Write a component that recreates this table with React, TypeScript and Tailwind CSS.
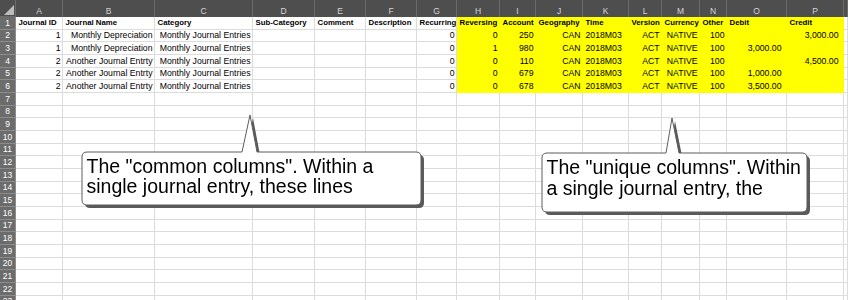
import React from "react";

const LETTERS = "ABCDEFGHIJKLMNOP".split("");
const COL_COUNT = 17; // A..P plus the partly visible Q
const ROW_COUNT = 23;

type Align = "l" | "r" | "rn";

// alignment of the body cells, column by column (A..Q)
const ALIGN: Align[] = ["r", "r", "r", "l", "l", "l", "r", "r", "r", "r", "l", "r", "r", "r", "rn", "rn", "l"];

const HEADERS = [
  "Journal ID",
  "Journal Name",
  "Category",
  "Sub-Category",
  "Comment",
  "Description",
  "Recurring",
  "Reversing",
  "Account",
  "Geography",
  "Time",
  "Version",
  "Currency",
  "Other",
  "Debit",
  "Credit",
  "",
];

const ROWS: string[][] = [
  ["1", "Monthly Depreciation", "Monthly Journal Entries", "", "", "", "0", "0", "250", "CAN", "2018M03", "ACT", "NATIVE", "100", "", "3,000.00", ""],
  ["1", "Monthly Depreciation", "Monthly Journal Entries", "", "", "", "0", "1", "980", "CAN", "2018M03", "ACT", "NATIVE", "100", "3,000.00", "", ""],
  ["2", "Another Journal Entrty", "Monthly Journal Entries", "", "", "", "0", "0", "110", "CAN", "2018M03", "ACT", "NATIVE", "100", "", "4,500.00", ""],
  ["2", "Another Journal Entrty", "Monthly Journal Entries", "", "", "", "0", "0", "679", "CAN", "2018M03", "ACT", "NATIVE", "100", "1,000.00", "", ""],
  ["2", "Another Journal Entrty", "Monthly Journal Entries", "", "", "", "0", "0", "678", "CAN", "2018M03", "ACT", "NATIVE", "100", "3,500.00", "", ""],
];

function isYellow(row: number, col: number) {
  // highlighted block H1:P6
  return row >= 1 && row <= 6 && col >= 7 && col <= 15;
}

function BodyCell({ row, col }: { row: number; col: number }) {
  const yellow = isYellow(row, col);
  let text = "";
  let bold = false;
  if (row === 1) {
    text = HEADERS[col];
    bold = true;
  } else if (row >= 2 && row <= 6) {
    text = ROWS[row - 2][col];
  }
  const align = row === 1 ? "l" : ALIGN[col];
  const alignCls =
    align === "l"
      ? "justify-start pl-[2.5px]"
      : align === "rn"
      ? "justify-end pr-[4.5px]"
      : "justify-end pr-[1.5px]";
  const fill = yellow ? "bg-[#ffff00] border-[#ffff00]" : "bg-white border-[#dcdcdc]";
  const weight = bold ? "font-bold text-[7.8px]" : "text-[8.7px]";
  return (
    <div
      className={`flex items-center overflow-hidden whitespace-nowrap border-r border-b leading-none text-black ${fill} ${alignCls} ${weight}`}
    >
      {text}
    </div>
  );
}

function Callouts() {
  const bubble1 =
    "M87 152 L242 152 L250 115 L257 152 L416 152 Q421 152 421 157 L421 200 Q421 205 416 205 L87 205 Q82 205 82 200 L82 157 Q82 152 87 152 Z";
  const bubble2 =
    "M547 153 L666 153 L672 118 L679 153 L802 153 Q807 153 807 158 L807 207 Q807 212 802 212 L547 212 Q542 212 542 207 L542 158 Q542 153 547 153 Z";
  return (
    <>
      <svg className="pointer-events-none absolute left-0 top-0" width="848" height="300" viewBox="0 0 848 300">
        <defs>
          <filter id="calloutShade" x="-5%" y="-5%" width="110%" height="120%">
            <feGaussianBlur stdDeviation="0.7" />
          </filter>
        </defs>
        <g filter="url(#calloutShade)" fill="#5a5a5a">
          <path d={bubble1} transform="translate(3 3)" />
          <path d={bubble2} transform="translate(3 3)" />
        </g>
        <path d={bubble1} fill="#ffffff" stroke="#5c5c5c" strokeWidth="1" />
        <path d={bubble2} fill="#ffffff" stroke="#5c5c5c" strokeWidth="1" />
      </svg>
      <div className="pointer-events-none absolute left-[86.5px] top-[156px] whitespace-nowrap font-['Liberation_Sans',Arial,sans-serif] text-[19.5px] leading-[20px] text-black">
        <div>The "common columns". Within a</div>
        <div>single journal entry, these lines</div>
      </div>
      <div className="pointer-events-none absolute left-[546.5px] top-[157px] whitespace-nowrap font-['Liberation_Sans',Arial,sans-serif] text-[19.5px] leading-[21px] text-black">
        <div>The "unique columns". Within</div>
        <div>a single journal entry, the</div>
      </div>
    </>
  );
}

export default function App() {
  const cells: React.ReactNode[] = [];

  // top-left corner with the select-all triangle
  cells.push(
    <div key="corner" className="relative border-r border-b border-[#6a6a6a] bg-[#4e4e4e]">
      <svg className="absolute left-[4px] top-[5px]" width="10" height="10" viewBox="0 0 10 10">
        <path d="M10 0 L10 10 L0 10 Z" fill="#bdbdbd" />
      </svg>
    </div>
  );
  for (let c = 0; c < COL_COUNT; c++) {
    cells.push(
      <div
        key={`h-${c}`}
        className="flex items-end justify-center border-r border-[#6a6a6a] bg-[#4e4e4e] pb-[2px] text-[8.5px] leading-none text-[#d4d4d4]"
      >
        {LETTERS[c] ?? ""}
      </div>
    );
  }

  for (let r = 1; r <= ROW_COUNT; r++) {
    cells.push(
      <div
        key={`rh-${r}`}
        className="flex items-center justify-center border-b border-r border-[#8c8c8c] bg-[#6c6c6c] text-[8.5px] leading-none text-white"
      >
        {r}
      </div>
    );
    for (let c = 0; c < COL_COUNT; c++) {
      cells.push(<BodyCell key={`c-${r}-${c}`} row={r} col={c} />);
    }
  }

  return (
    <div className="relative h-[300px] w-[848px] overflow-hidden bg-white font-['Liberation_Sans',Arial,sans-serif]">
      <div className="grid grid-cols-[16px_47px_92px_98px_62px_51px_51px_40px_43px_36px_47px_46px_33px_38px_27px_60px_57px_1fr] grid-rows-[17px_repeat(23,12.68px)]">
        {cells}
      </div>
      <Callouts />
    </div>
  );
}
